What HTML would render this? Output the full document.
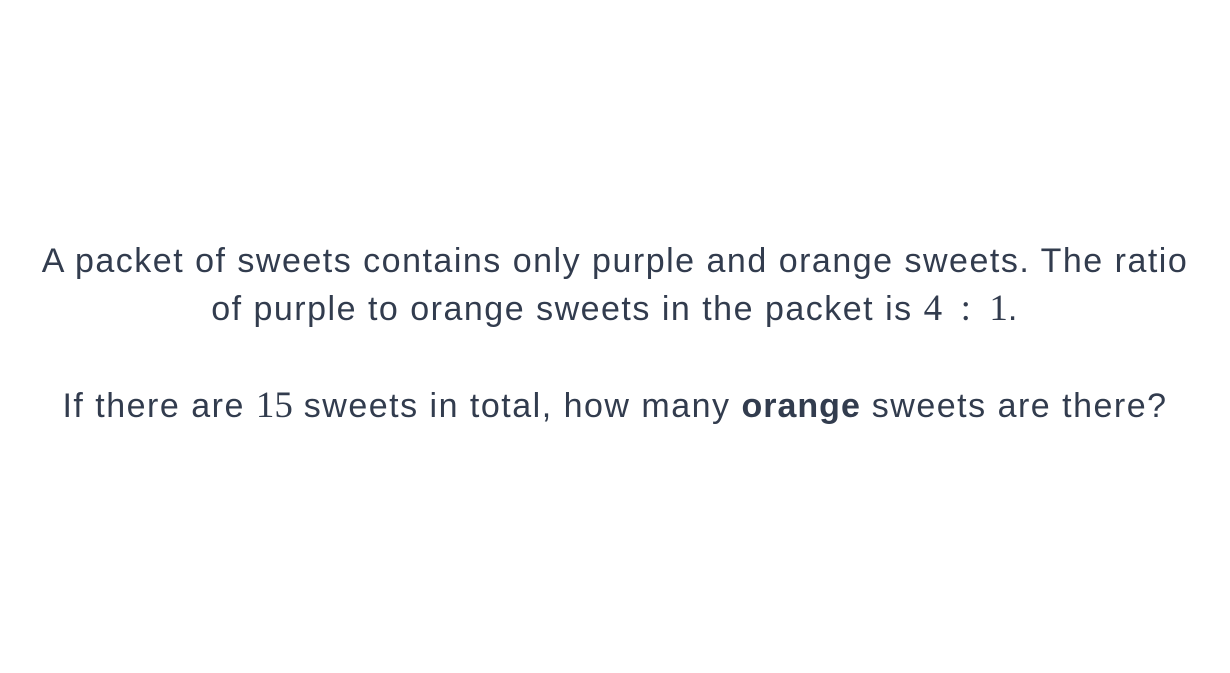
<!DOCTYPE html>
<html><head><meta charset="utf-8"><style>
html,body{margin:0;padding:0;background:#fff;}
body{width:1230px;height:673px;overflow:hidden;font-family:"Liberation Sans",sans-serif;color:#323c4e;}
.wrap{position:absolute;left:0;width:1230px;text-align:center;font-size:34px;line-height:48px;letter-spacing:1.5px;white-space:nowrap;}
.m{font-family:"Liberation Serif",serif;font-size:37px;letter-spacing:0;}
b{font-weight:bold;letter-spacing:1px;}
</style></head><body>
<div class="wrap" style="top:237px;">A packet of sweets contains only purple and orange sweets. The ratio<br>of purple to orange sweets in the packet is <span class="m">4&nbsp;&nbsp;:&nbsp;&nbsp;1</span>.</div>
<div class="wrap" style="top:382px;">If there are <span class="m">15</span> sweets in total, how many <b>orange</b> sweets are there?</div>
</body></html>
